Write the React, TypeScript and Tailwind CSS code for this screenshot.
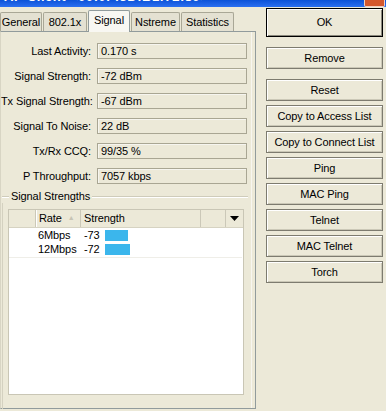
import React from 'react';

const font = { fontFamily: '"Liberation Sans", Arial, sans-serif' };

const fields = [
  ['Last Activity:', '0.170 s'],
  ['Signal Strength:', '-72 dBm'],
  ['Tx Signal Strength:', '-67 dBm'],
  ['Signal To Noise:', '22 dB'],
  ['Tx/Rx CCQ:', '99/35 %'],
  ['P Throughput:', '7057 kbps'],
];

const rates = [
  { rate: '6Mbps', strength: '-73', bar: 23 },
  { rate: '12Mbps', strength: '-72', bar: 25 },
];

function Btn({ label, big, className = '' }: { label: string; big?: boolean; className?: string }) {
  return (
    <button
      className={`w-[117px] flex items-center justify-center bg-[#ECE9D8] text-[11px] tracking-[-0.1px] text-black ${
        big
          ? 'h-[29px] border border-black shadow-[inset_1px_1px_0_#fff,inset_-1px_-1px_0_#8a887c]'
          : 'h-[22px] border border-[#7d7b6f] shadow-[inset_1px_1px_0_#fff,inset_-1px_-1px_0_#cbc8b7]'
      } ${className}`}
    >
      {label}
    </button>
  );
}

export default function App() {
  const tabs = ['General', '802.1x', 'Signal', 'Nstreme', 'Statistics'];

  return (
    <div style={font} className="w-[386px] h-[411px] bg-[#ECE9D8] overflow-hidden text-black">
      {/* title bar, mostly cut off */}
      <div className="h-[7px] bg-gradient-to-b from-[#0b52d8] to-[#2a6ff0] flex justify-between overflow-hidden">
        <span className="-mt-[11px] ml-[4px] text-[13px] leading-[16px] font-bold text-white whitespace-nowrap tracking-[0.5px]">
          AP Client &lt;00:0F:3D:B1:72:89&gt;
        </span>
        <div className="w-[21px] h-[7px] mr-[1px] bg-[#d4572d] rounded-b-[2px] border-x border-b border-white/70" />
      </div>

      <div className="flex">
        {/* left: tab control */}
        <div className="w-[256px] flex flex-col">
          <div className="h-[24px] flex items-end">
            {tabs.map((t) => {
              const sel = t === 'Signal';
              return (
                <div
                  key={t}
                  className={`px-[2px] flex items-center justify-center border-t border-x text-[11px] tracking-[-0.1px] rounded-t-[2px] ${
                    sel
                      ? 'h-[22px] bg-[#F8F7F2] border-[#919b9c] border-b-0 relative top-[1px] z-10 pb-[2px] w-[42px]'
                      : 'h-[19px] bg-[#E4E1D2] border-[#a9a796] mr-[1px]'
                  } ${t === 'General' ? 'w-[42px]' : ''} ${t === '802.1x' ? 'w-[44px]' : ''} ${
                    t === 'Nstreme' ? 'w-[49px] ml-[1px]' : ''
                  } ${t === 'Statistics' ? 'w-[53px]' : ''}`}
                >
                  {t}
                </div>
              );
            })}
          </div>

          <div className="h-[378px] border border-[#919b9c] border-l-[#d8d5c4] flex">
            <div className="flex-1 flex flex-col pt-[11px]">
              <div className="flex flex-col gap-[9px]">
                {fields.map(([l, v]) => (
                  <div key={l} className="flex items-center h-[16px]">
                    <div className="w-[90px] text-right text-[11px] tracking-[-0.1px] whitespace-nowrap">{l}</div>
                    <div className="ml-[6px] w-[150px] h-[16px] border border-[#a9a693] bg-[#ECE9D8] flex items-center pl-[3px] text-[11px] tracking-[-0.1px] shadow-[inset_1px_1px_0_#f6f5ef]">
                      {v}
                    </div>
                  </div>
                ))}
              </div>

              {/* group box */}
              <div className="mt-[6px] ml-[1px] mr-[3px] flex flex-col">
                <div className="h-[13px] flex items-center">
                  <div className="w-[7px] border-t border-[#cfccbb] border-b border-b-white" />
                  <span className="px-[2px] text-[11px] tracking-[-0.1px] leading-[13px]">Signal Strengths</span>
                  <div className="flex-1 border-t border-[#cfccbb] border-b border-b-white" />
                </div>

                <div className="border-l border-[#d4d1c0] pl-[5px] pt-[6px] pr-[4px] h-[206px]">
                  <div className="w-[236px] h-[186px] border border-[#c9c6b5] bg-white flex flex-col">
                    <div className="h-[18px] flex bg-[#ECE9D8] border-b border-[#d6d3c2] text-[11px] tracking-[-0.1px]">
                      <div className="w-[27px] border-r border-[#cbc8b8] shadow-[1px_0_0_#fff]" />
                      <div className="w-[45px] border-r border-[#cbc8b8] flex items-center pl-[3px] gap-[6px]">
                        Rate
                        <span className="text-[7px] text-[#c7c4b4]">▲</span>
                      </div>
                      <div className="w-[120px] border-r border-[#cbc8b8] flex items-center pl-[3px]">Strength</div>
                      <div className="w-[25px] border-r border-[#cbc8b8]" />
                      <div className="flex-1 flex items-center justify-center">
                        <svg width="9" height="5" viewBox="0 0 9 5">
                          <path d="M0 0h9L4.5 5z" fill="#000" />
                        </svg>
                      </div>
                    </div>
                    {rates.map((r) => (
                      <div key={r.rate} className="h-[14px] flex items-center text-[11px] tracking-[-0.1px]">
                        <div className="w-[27px]" />
                        <div className="w-[45px] pl-[2px]">{r.rate}</div>
                        <div className="flex items-center pl-[3px]">
                          <span className="w-[21px]">{r.strength}</span>
                          <div className="h-[11px] bg-[#3bb6ec]" style={{ width: r.bar }} />
                        </div>
                      </div>
                    ))}
                    <div className="mt-[1px] border-t border-[#efeee8] w-[233px]" />
                  </div>
                </div>
              </div>
            </div>
            <div className="w-[2px] border-l border-[#f7f6f0] mr-[4px]" />
          </div>
        </div>

        {/* right: buttons */}
        <div className="ml-[10px] pt-[1px] flex flex-col gap-[4px]">
          <Btn label="OK" big />
          <Btn label="Remove" className="mt-[6px]" />
          <Btn label="Reset" className="mt-[6px]" />
          <Btn label="Copy to Access List" />
          <Btn label="Copy to Connect List" />
          <Btn label="Ping" />
          <Btn label="MAC Ping" />
          <Btn label="Telnet" />
          <Btn label="MAC Telnet" />
          <Btn label="Torch" />
        </div>
      </div>
    </div>
  );
}
